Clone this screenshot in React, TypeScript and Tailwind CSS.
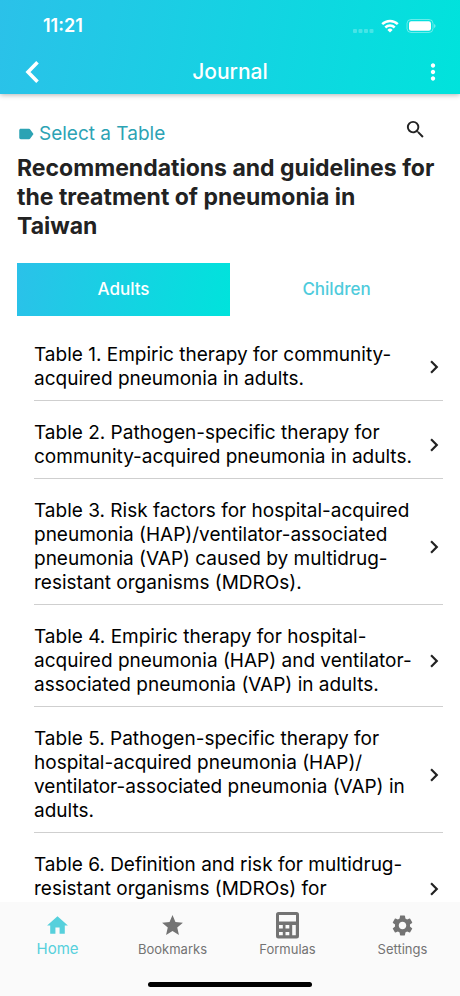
import clsx from "clsx";
import {
  MdChevronRight,
  MdHome,
  MdLabel,
  MdMoreVert,
  MdSearch,
  MdSettings,
  MdStar,
} from "react-icons/md";

const TABLES = [
  "Table 1. Empiric therapy for community-acquired pneumonia in adults.",
  "Table 2. Pathogen-specific therapy for community-acquired pneumonia in adults.",
  "Table 3. Risk factors for hospital-acquired pneumonia (HAP)/ventilator-associated pneumonia (VAP) caused by multidrug-resistant organisms (MDROs).",
  "Table 4. Empiric therapy for hospital-acquired pneumonia (HAP) and ventilator-associated pneumonia (VAP) in adults.",
  "Table 5. Pathogen-specific therapy for hospital-acquired pneumonia (HAP)/\u200bventilator-associated pneumonia (VAP) in adults.",
  "Table 6. Definition and risk for multidrug-resistant organisms (MDROs) for ventilator-associated pneumonia.",
];

function CalculatorIcon() {
  return (
    <svg width="23" height="28" viewBox="0 0 23 28" aria-hidden="true">
      <path
        fill="currentColor"
        fillRule="evenodd"
        d="M2.5 1h18A2.500 2.500 0 0 1 23 3.500V25a2.500 2.500 0 0 1-2.500 2.500h-18A2.500 2.500 0 0 1 0 25V3.500A2.500 2.500 0 0 1 2.500 1zM3 4v6.500h17V4zM3 14v3.400h3.800V14zM9.500 14v3.400h3.800V14zM16.200 14v10.300h3.600V14zM3 20.900v3.400h3.800v-3.400zM9.500 20.900v3.400h3.800v-3.400z"
      />
    </svg>
  );
}

function StatusBar() {
  return (
    <div className="flex h-[50px] items-center justify-between pl-[43px] pr-6 pt-px">
      <span className="text-lg font-semibold">11:21</span>
      <div className="flex items-center gap-[7px]">
        <svg width="22" height="16" viewBox="0 0 22 16" aria-hidden="true">
          <g fill="#fff" fillOpacity="0.25">
            <rect x="1" y="11" width="4" height="4" rx="1" />
            <rect x="6.5" y="11" width="4" height="4" rx="1" />
            <rect x="12" y="11" width="4" height="4" rx="1" />
            <rect x="17.5" y="11" width="4" height="4" rx="1" />
          </g>
        </svg>
        <svg width="18" height="14" viewBox="0 0 18 14" aria-hidden="true">
          <g fill="none" stroke="#fff" strokeWidth="2.5">
            <path d="M1.2 5.2a11.2 11.2 0 0 1 15.6 0" />
            <path d="M4.3 8.5a6.7 6.7 0 0 1 9.4 0" />
          </g>
          <path fill="#fff" d="M9 13.5l-2.6-2.6a3.7 3.7 0 0 1 5.2 0z" />
        </svg>
        <svg width="30" height="14" viewBox="0 0 30 14" aria-hidden="true">
          <rect x="1" y="0.5" width="26" height="13" rx="4" fill="none" stroke="#fff" strokeOpacity="0.4" />
          <rect x="3" y="2.3" width="22" height="9.4" rx="2.2" fill="#fff" />
          <path d="M28.2 5v4a2.2 2.2 0 0 0 0-4z" fill="#fff" fillOpacity="0.5" />
        </svg>
      </div>
    </div>
  );
}

function Header() {
  return (
    <header className="relative z-10 shrink-0 bg-linear-[100deg] from-[#2bc1e9] to-[#00e3dc] text-white shadow-[0_1px_5px_rgba(0,0,0,0.3)]">
      <StatusBar />
      <div className="grid h-11 grid-cols-[48px_1fr_48px] items-center">
        <button aria-label="Back" className="flex justify-end pr-2">
          <svg width="16" height="24" viewBox="0 0 16 24" aria-hidden="true">
            <path d="M13.5 2.2L4 12l9.5 9.8" fill="none" stroke="#fff" strokeWidth="3.6" />
          </svg>
        </button>
        <h1 className="text-center text-[21px] font-medium">Journal</h1>
        <button aria-label="More" className="flex pl-2">
          <MdMoreVert size={26} />
        </button>
      </div>
    </header>
  );
}

function TableRow({ title }: { title: string }) {
  return (
    <li className="border-b border-[#cfcfcf]">
      <a href="#" className="flex items-center justify-between pt-5 pb-[9px]">
        <span className="w-[380px] text-[19px] leading-6">{title}</span>
        <MdChevronRight size={26} className="-mr-1 shrink-0 text-[#222]" />
      </a>
    </li>
  );
}

const NAV = [
  { label: "Home", icon: <MdHome size={25} />, active: true },
  { label: "Bookmarks", icon: <MdStar size={25} /> },
  { label: "Formulas", icon: <CalculatorIcon /> },
  { label: "Settings", icon: <MdSettings size={25} /> },
];

function BottomNav() {
  return (
    <nav className="relative z-10 shrink-0 bg-[#fafafa]">
      <div className="grid h-[66px] grid-cols-4 pt-[9px]">
        {NAV.map((x) => (
          <a
            key={x.label}
            href="#"
            className={clsx(
              "flex flex-col items-center",
              x.active ? "text-[15px] text-[#56d0dc]" : "text-[13px] text-[#737373]"
            )}
          >
            <span className="flex h-7 items-center">{x.icon}</span>
            <span className="leading-5">{x.label}</span>
          </a>
        ))}
      </div>
      <div className="flex h-7 items-center justify-center pt-1">
        <div className="h-[5px] w-[164px] rounded-full bg-black" />
      </div>
    </nav>
  );
}

export default function App() {
  return (
    <div className="flex h-screen flex-col overflow-hidden bg-white font-['Inter',sans-serif] text-black">
      <Header />
      <main className="min-h-0 flex-1 overflow-y-auto px-[17px] pt-6 [scrollbar-width:none]">
        <div className="flex h-9 items-start justify-between">
          <div className="flex items-center gap-1 pt-0.5 text-[19px] text-[#2ca3b4]">
            <MdLabel size={18} />
            <span>Select a Table</span>
          </div>
          <button aria-label="Search" className="mr-4">
            <MdSearch size={23} className="text-[#222]" />
          </button>
        </div>
        <h2 className="text-[23px] leading-[29px] font-bold text-[#222]">
          Recommendations and guidelines for the treatment of pneumonia in
          <br />
          Taiwan
        </h2>
        <div className="mt-[22px] grid grid-cols-2">
          <button className="h-[53px] bg-linear-[100deg] from-[#2bc1e9] to-[#00e3dc] text-[17px] font-medium text-white">
            Adults
          </button>
          <button className="h-[53px] text-[17px] font-medium text-[#4fcbdc]">Children</button>
        </div>
        <ul className="mt-[7px] pl-[17px]">
          {TABLES.map((x) => (
            <TableRow key={x} title={x} />
          ))}
        </ul>
      </main>
      <BottomNav />
    </div>
  );
}
